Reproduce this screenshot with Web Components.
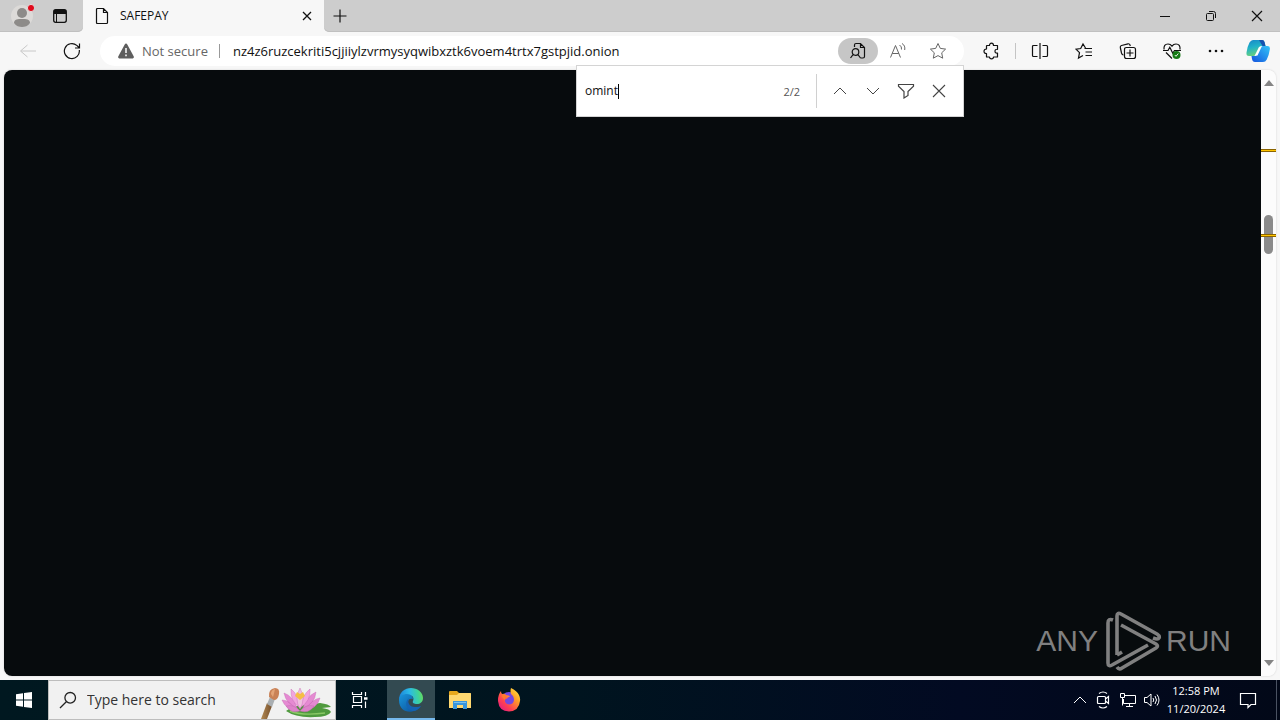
<!DOCTYPE html>
<html lang="en">
<head>
<meta charset="utf-8">
<title>SAFEPAY</title>
<style>
  html, body { margin: 0; height: 100%; }
  body { font-family: "Open Sans", "Noto Sans", sans-serif; font-size: 12px; color: #111; overflow: hidden; }
</style>
</head>
<body>
<desktop-screen></desktop-screen>

<script>
const line = (d, extra = '') => `<path d="${d}" fill="none" stroke="currentColor" ${extra}/>`;

/* name: [width, height, markup] */
const ICONS = {
  profile: [24, 24, `<circle cx="12" cy="12" r="11" fill="#dcdad8"/><circle cx="12" cy="9" r="5" fill="#8d8b89"/><path d="M4 19c0-4 4-4 8-4s8 0 8 4c-2 3-5 4-8 4s-6-1-8-4z" fill="#8d8b89"/><circle cx="21" cy="4" r="3.6" fill="#e00b1c" stroke="#e4dcdc"/>`],
  tabs: [16, 16, `<rect x="1.7" y="1.7" width="12.6" height="12.6" rx="2" fill="none" stroke="currentColor" stroke-width="1.3"/><path d="M2 2h12v4H5v8H4V6H2z" fill="currentColor"/>`],
  file: [14, 18, line('M2.5 1.5h6l4 4v10q0 1-1 1h-9q-1 0-1-1v-13q0-1 1-1zM8.5 1.5v4h4', 'stroke-width="1.2"')],
  close: [12, 12, line('M2 2l8 8M10 2l-8 8', 'stroke-width="1.3"')],
  plus: [14, 14, line('M7 .5v13M.5 7h13', 'stroke-width="1.2"')],
  min: [12, 12, line('M1 6.5h10')],
  restore: [12, 12, line('M2.5 3.5h5q1 0 1 1v5q0 1-1 1h-5q-1 0-1-1v-5q0-1 1-1zM4 1.5h4.5q2 0 2 2V8')],
  x: [14, 14, line('M2 2l10 10M12 2L2 12', 'stroke-width="1.2"')],
  back: [18, 16, line('M17 8H2M8.5 2l-7 6 7 6')],
  reload: [18, 18, line('M16.3 8A7.5 7.5 0 1 1 13.8 3.4L16 5.5M16.5 1.5v4.5h-4.5', 'stroke-width="1.2"')],
  warn: [18, 16, `<path d="M9 .5q.8 0 1.3 1l6.5 12q.5 1.5-1 2H2.2q-1.5-.5-1-2l6.5-12Q8.2.5 9 .5z" fill="#5e5e5e"/><path d="M9 5v5M9 11.5v1.8" stroke="#fff" stroke-width="1.5"/>`],
  findpage: [18, 18, line('M5.5 5V3q0-1.500 1.500-1.500h4.500l4 4v9q0 1.500-1.500 1.500h-2.500M11.500 1.500v4h4M9.800 10a3.300 3.300 0 1 1-6.600 0 3.300 3.300 0 0 1 6.600 0zM4.200 12.400L1.500 16M8.800 12.400l2.700 3.600', 'stroke-width="1.200"')],
  read: [18, 18, line('M1.500 15.500L6.500 3.500l5 12M3.200 11.500h6.600M10.500 3q2.500 1.500 2 4.500M13 1.500q3.500 2 2.700 6.500')],
  star: [18, 18, line('M9 1.500l2.300 4.900 5.300.7-3.900 3.700 1 5.400L9 13.600l-4.700 2.600 1-5.400L1.400 7.100l5.300-.7z')],
  puzzle: [18, 18, line('M5 3.500h2.500Q7.500 1.200 9.500 1.200t2 2.300h4v3.800q-2.500-.3-2.500 1.900t2.500 1.900v3.900h-4q0 1.800-2 1.800t-2-1.800H4.500v-3.500Q2 11.500 2 9.300T4.500 7V4z', 'stroke-width="1.200" stroke-linejoin="round"')],
  split: [18, 18, line('M6.500 3.500h-4q-1 0-1 1v9q0 1 1 1h4M11.500 3.500h4q1 0 1 1v9q0 1-1 1h-4M9 1v16', 'stroke-width="1.200"')],
  favs: [18, 18, line('M10.500 6L8 2 5.700 6.500 1 7.200l3.500 3.500L3.500 16 8 13.500M9.500 6.500h7.500M10.500 10h6.500M10.500 13.500h6.500', 'stroke-width="1.200"')],
  collect: [18, 18, line('M4.500 13Q3 13 2.500 11L1.300 5.500Q1 4 2.500 3.500L9 1.800q1.500-.3 2 1.200l.3 1M7.500 5.500h7q2 0 2 2v7q0 2-2 2h-7q-2 0-2-2v-7q0-2 2-2zM11 7.500v7M7.500 11h7', 'stroke-width="1.200"')],
  heart: [20, 18, line('M2 7.500Q1.500 2 6 2q2.500 0 4 2.200Q11.500 2 14 2q4.500 0 4 5.500M1 8.500h5l1.800-3.300 3 6L12.500 8.500H19M4 10.500l6 6', 'stroke-width="1.200"') + `<circle cx="14.500" cy="13" r="4" fill="#157a15"/><path d="M12.800 13l1.200 1.300 2.300-2.800" fill="none" stroke="#fff" stroke-width=".9"/>`],
  more: [16, 6, `<g fill="currentColor"><circle cx="2" cy="3" r="1.300"/><circle cx="8" cy="3" r="1.300"/><circle cx="14" cy="3" r="1.300"/></g>`],
  copilot: [24, 24, `<defs><linearGradient id="a" x1="0" y1="0" x2=".3" y2="1"><stop offset="0" stop-color="#1785c8"/><stop offset=".5" stop-color="#20b2c8"/><stop offset="1" stop-color="#66d07e"/></linearGradient><linearGradient id="b" x1="1" y1="0" x2="0" y2="1"><stop offset="0" stop-color="#32c5f8"/><stop offset="1" stop-color="#1454de"/></linearGradient></defs><path d="M7 1h9q2 0 2.500 2l1 4h-4q-2 0-3 3l-2 5q-.8 2-3 2H3q-3 0-2.500-3.500Q1.500 7 3.500 3.500 5 1 7 1z" fill="url(#a)"/><path d="M13 1h3q2 0 2.500 2l1 4h-3z" fill="#1552b0"/><path d="M17 7h4.500q3 0 2.300 3.500-1 6.500-3 10Q19.500 23 17 23H9q-2.500 0-3-3l-.5-3H8q2 0 3-2l3-6q1-2 3-2z" fill="url(#b)"/><path d="M13 8l3-1-4.500 9.500-3 .5z" fill="#fff"/>`],
  up: [14, 8, line('M1 7l6-6 6 6')],
  down: [14, 8, line('M1 1l6 6 6-6')],
  filter: [18, 16, line('M1.500 1.500h15v1.700L11 8.500v4L7 15V8.500L1.500 3.200z', 'stroke-width="1.200"')],
  bigx: [14, 14, line('M1 1l12 12M13 1L1 13', 'stroke-width="1.100"')],
  triup: [10, 6, `<path d="M5 0l5 6H0z" fill="#858585"/>`],
  tridown: [10, 6, `<path d="M0 0h10L5 6z" fill="#858585"/>`],
  windows: [16, 16, `<path d="M0 2.300L7 1.200v6.300H0zM8 1l8-1v7.500H8zM0 8.500h7v6.300l-7-1zM8 8.500h8V16l-8-1z" fill="#fff"/>`],
  search: [18, 18, line('M16.500 6.800a5.300 5.300 0 1 1-10.600 0 5.300 5.300 0 0 1 10.600 0zM7.300 10.700L1 17', 'stroke-width="1.300"')],
  lotus: [74, 38, `<defs><linearGradient id="w" x1="0" x2="1"><stop offset="0" stop-color="#b48a53"/><stop offset="1" stop-color="#76502d"/></linearGradient></defs>
    <path d="M0 38L6 22l5 3L6 38z" fill="url(#w)"/><path d="M6 23l3-7 5 2-3 8z" fill="#a9aeb1"/><path d="M8 16Q7 8 14 7q5 0 4 6t-5 6z" fill="#c98257"/><path d="M10 13q0-4 4-5-1 5-2 8z" fill="#e3a477"/>
    <path d="M25 30q8-7 22-6l12-2q9 1 11 4l-9 1q8 1 9 4-3 5-16 5Q35 37 25 30z" fill="#4f9a3e"/><path d="M29 30q12 5 35 2" fill="none" stroke="#89c765" stroke-width="1.500"/>
    <g transform="translate(-1 2)" stroke="#c565b2" stroke-width=".4"><path d="M22 17q8 0 14 10-10 0-14-10zM60 15q-8 1-15 12 12-1 15-12zM24 10q9 3 13 15Q26 21 24 10zM56 9q-9 4-13 16Q55 21 56 9z" fill="#e58ad2"/><path d="M31 6q8 6 9 19-10-7-9-19zM50 6q-8 6-10 19Q51 18 50 6z" fill="#f1a5df"/><path d="M40 5q6 11 0 21-6-10 0-21z" fill="#efc0df"/><path d="M26 23q8-2 14 5-9 3-14-5zM54 23q-8-2-14 5 9 3 14-5z" fill="#dd82ca"/></g><path d="M34 15l2-4 3 2 3-2 2 4-5 4z" fill="#f5bd45"/>`],
  taskview: [18, 18, `<g fill="none" stroke="#fff" stroke-width="1.200"><path d="M1.500 1v2.500h9V1M1.500 17v-2.500h9V17M2.500 5.500h8v6h-8zM14.500 1v4M14.500 10.500V17"/><path d="M13 7.500h3.500" stroke-width="2.500"/></g>`],
  edge: [26, 26, `<defs><linearGradient id="e" x1="0" y1=".5" x2="1" y2=".4"><stop offset="0" stop-color="#1b83d9"/><stop offset=".45" stop-color="#2bb9e8"/><stop offset=".8" stop-color="#3fd39a"/><stop offset="1" stop-color="#68db5c"/></linearGradient><linearGradient id="f" x1="0" x2="1" y2="1"><stop offset="0" stop-color="#1996dc"/><stop offset="1" stop-color="#0b4a94"/></linearGradient></defs><path d="M1 13C1 5 7 1 13 1s12 4 12 10c0 4-3 6-6 6-3 0-5-1-4-3 1-2 1-6-5-6-5 0-9 3-9 5z" fill="url(#e)"/><path d="M1 13c0-4 4-6 8-6 4 0 6 3 6 5-4-1-5 1-5 4 0 4 6 6 13 3-5 8-22 9-22-6z" fill="url(#f)"/><path d="M11 11c-2 4 0 9 6 9 2 0 5 0 6-1-2 3-5 5-8 5-7-1-9-9-4-13z" fill="#1463b3"/>`],
  folder: [22, 20, `<path d="M0 2q0-1 1-1h7l2 2h11q1 0 1 1v3H0z" fill="#e8a91e"/><path d="M10 3h11q1 0 1 1v14H0V5h8z" fill="#ffd870"/><path d="M4 19v-8h14v8h-4v-4H8v4z" fill="#3795dc"/><path d="M5 12h12v1H5z" fill="#78c0ee"/>`],
  firefox: [24, 24, `<defs><linearGradient id="x" x1="1" y1="0" x2=".1" y2="1"><stop offset="0" stop-color="#fff14a"/><stop offset=".35" stop-color="#ffa126"/><stop offset=".7" stop-color="#ff4052"/><stop offset="1" stop-color="#e0168a"/></linearGradient></defs><circle cx="12" cy="12" r="8" fill="#7547e0"/><path d="M14 0q6 3 8 7 1.500 3 1 6-1 10-11 10.500Q2 23.500 1 13 .800 7 4 3q0 2 1 3 3-1 4 1 3 0 4 1.500-2 .5-3 2-2.500.500-2 3 1 3 4.500 3 4-.500 4.500-4.500Q17 8 14 6q-1-3 0-6z" fill="url(#x)"/><path d="M4.500 8q2.500-2.500 5-.500Q8 9 7.500 12z" fill="#ff7b2b"/>`],
  meet: [16, 20, `<g fill="none" stroke="#fff" stroke-width="1.200"><path d="M2.500 6.500h6q1 0 1 1v5q0 1-1 1h-6q-1 0-1-1v-5q0-1 1-1zM9.500 9l3-2.500v7L9.500 11M3 3.500q4-3 8 0M3 16.500q4 3 8 0"/></g>`],
  network: [18, 16, `<g fill="none" stroke="#fff"><path d="M5 3.500h11.500v8H4.500V7M10.500 11.500v3M7 14.500h7M1.500 1.500h4v4h-4zM3.500 5.500v8"/></g>`],
  volume: [18, 14, `<g fill="none" stroke="#fff"><path d="M1.500 4.500h2.500l4-3.500v12l-4-3.500H1.500zM10 5q1.500 2 0 4M12 3q3 4 0 8M14 1.500q4 5.500 0 11"/></g>`],
  note: [18, 18, `<path d="M1.500 2.500h15v11H12l-3 3v-3H1.500z" fill="none" stroke="#fff" stroke-width="1.200"/>`],
  play: [60, 64, `<g fill="none" stroke="#808080" stroke-width="3.600" stroke-linejoin="round"><path d="M11 11Q6 9 6 14v40q0 4 4 2l36-20"/><path d="M15 46V7q0-4 4-2l36 20q3 2 2 4-1 2-6 0"/><path d="M15 46l5-3"/><path d="M19 16l35 19q3 2 0 4L20 59q-3 2-5-1"/></g>`]
};

function define(name, html) {
  customElements.define(name, class extends HTMLElement {
    constructor() {
      super();
      this.attachShadow({ mode: 'open' }).innerHTML = html;
    }
  });
}

customElements.define('ui-icon', class extends HTMLElement {
  connectedCallback() {
    if (this.shadowRoot) return;
    const [w, h, art] = ICONS[this.getAttribute('name')];
    this.attachShadow({ mode: 'open' }).innerHTML =
      `<style>:host{display:block;flex:none}svg{display:block}</style><svg width="${w}" height="${h}" viewBox="0 0 ${w} ${h}" aria-hidden="true">${art}</svg>`;
  }
});

customElements.define('icon-button', class extends HTMLElement {
  connectedCallback() {
    if (this.shadowRoot) return;
    this.attachShadow({ mode: 'open' }).innerHTML = `<style>
      :host { display: block; flex: none; width: 40px; height: 28px; }
      button { width: 100%; height: 100%; padding: 0; border: 0; background: var(--bg, none); border-radius: var(--radius, 0);
        color: inherit; display: flex; align-items: center; justify-content: center; }
      </style><button type="button" aria-label="${this.getAttribute('label')}"><ui-icon name="${this.getAttribute('icon')}"></ui-icon></button>`;
  }
});

define('tab-strip', `<style>
  :host { display: flex; align-items: stretch; height: 32px; background: #f7f7f7; }
  .lead, .rest { background: #cdcdcd; display: flex; align-items: center; box-shadow: inset 0 -1px #c0c0c0; }
  .lead { width: 83px; border-bottom-right-radius: 5px; }
  .lead icon-button { width: 34px; }
  .lead icon-button:first-child { width: 43px; }
  .tab { width: 241px; box-sizing: border-box; display: flex; align-items: center; padding: 0 4px 0 12px; gap: 11px; }
  .tab span { flex: 1; line-height: 16px; }
  .tab icon-button { width: 26px; }
  .rest { flex: 1; border-bottom-left-radius: 5px; }
  .rest > :first-child { width: 32px; }
  .win { margin-left: auto; display: flex; height: 100%; }
  .win icon-button { width: 46px; height: 100%; }
</style>
<div class="lead"><icon-button icon="profile" label="Profile"></icon-button><icon-button icon="tabs" label="Tab actions"></icon-button></div>
<div class="tab"><ui-icon name="file"></ui-icon><span>SAFEPAY</span><icon-button icon="close" label="Close tab"></icon-button></div>
<div class="rest"><icon-button icon="plus" label="New tab"></icon-button>
  <div class="win"><icon-button icon="min" label="Minimize"></icon-button><icon-button icon="restore" label="Restore"></icon-button><icon-button icon="x" label="Close"></icon-button></div></div>`);

define('find-bar', `<style>
  :host { display: flex; align-items: center; box-sizing: border-box; width: 388px; height: 52px; padding: 0 8px;
    background: #fff; border: 1px solid #d4d4d4; }
  .field { flex: 1; display: flex; align-items: center; }
  input { field-sizing: content; border: 0; padding: 0; margin: 0; outline: 0; background: none; font: 12px/16px "Open Sans", "Noto Sans", sans-serif; color: #111; }
  .caret { width: 1px; height: 15px; background: #000; }
  output { color: #555; font-size: 11px; margin-right: 16px; }
  .rule { width: 1px; height: 34px; background: #d0d0d0; margin-right: 6px; }
  icon-button { width: 33px; height: 32px; color: #444; }
</style>
<div class="field"><input type="text" aria-label="Find on page" value="omint"><span class="caret"></span></div>
<output>2/2</output><span class="rule"></span>
<icon-button icon="up" label="Previous result"></icon-button><icon-button icon="down" label="Next result"></icon-button><icon-button icon="filter" label="Filter"></icon-button><icon-button icon="bigx" label="Close find"></icon-button>`);

define('address-bar', `<style>
  :host { position: relative; display: flex; align-items: center; height: 30px; border-radius: 15px; background: #fff; font-size: 13px; }
  .warn { display: flex; align-items: center; gap: 7px; padding-left: 17px; color: #666; }
  .rule { width: 1px; height: 14px; background: #999; margin: 0 13px 0 11px; }
  input { flex: 1; min-width: 0; border: 0; padding: 0; outline: 0; background: none; color: #111; font: 13px/20px "Open Sans", "Noto Sans", sans-serif; }
  icon-button { height: 26px; color: #666; }
  .on { --bg: #c6c6c6; --radius: 13px; color: #111; }
  icon-button:last-of-type { margin-right: 6px; }
  find-bar { position: absolute; right: 0; bottom: -51px; z-index: 2; }
</style>
<div class="warn"><ui-icon name="warn"></ui-icon><span>Not secure</span></div><span class="rule"></span>
<input type="text" aria-label="Address" value="nz4z6ruzcekriti5cjjiiylzvrmysyqwibxztk6voem4trtx7gstpjid.onion">
<icon-button class="on" icon="findpage" label="Find on page"></icon-button><icon-button icon="read" label="Read aloud"></icon-button><icon-button icon="star" label="Add to favorites"></icon-button>
<find-bar></find-bar>`);

define('browser-toolbar', `<style>
  :host { display: flex; align-items: center; gap: 4px; height: 38px; padding: 0 4px 0 8px; background: #f7f7f7; }
  .off { color: #c8c8c8; }
  address-bar { flex: 1; margin: 0 3px 0 4px; }
  .rule { width: 1px; height: 16px; background: #c4c4c4; }
  icon-button:last-child { width: 36px; }
</style>
<icon-button class="off" icon="back" label="Back"></icon-button><icon-button icon="reload" label="Refresh"></icon-button>
<address-bar></address-bar>
<icon-button icon="puzzle" label="Extensions"></icon-button><span class="rule"></span>
<icon-button icon="split" label="Split screen"></icon-button><icon-button icon="favs" label="Favorites"></icon-button><icon-button icon="collect" label="Collections"></icon-button><icon-button icon="heart" label="Browser essentials"></icon-button><icon-button icon="more" label="Settings and more"></icon-button><icon-button icon="copilot" label="Copilot"></icon-button>`);

define('page-scrollbar', `<style>
  :host { display: flex; flex-direction: column; justify-content: space-between; align-items: center; position: relative; width: 15px; box-sizing: border-box; padding: 10px 0; background: #fcfcfc; }
  .thumb { position: absolute; left: 3px; width: 9px; top: 24%; height: 39px; border-radius: 5px; background: #8b8b8b; }
  .hit { position: absolute; left: 0; right: 0; height: 1px; background: #ffc400; border: solid #8a6400; border-width: 1px 0; }
  .first { top: 13%; }
  .second { top: 27%; }
</style>
<ui-icon name="triup"></ui-icon><div class="thumb"></div><div class="hit first"></div><div class="hit second"></div><ui-icon name="tridown"></ui-icon>`);

define('any-run-mark', `<style>
  :host { display: flex; align-items: center; gap: 4px; color: #808080; font: 30px/48px "Liberation Sans", sans-serif; }
</style><span>ANY</span><ui-icon name="play"></ui-icon><span>RUN</span>`);

define('page-view', `<style>
  :host { display: flex; flex: 1; min-height: 0; margin: 0 4px 4px; border-radius: 8px; overflow: hidden; box-shadow: 0 0 2px #ccc; }
  main { flex: 1; background: #070b0d; display: flex; align-items: flex-end; justify-content: flex-end; padding: 0 30px 3px 0; }
</style><main><any-run-mark></any-run-mark></main><page-scrollbar></page-scrollbar>`);

define('task-bar', `<style>
  :host { display: flex; height: 40px; background: linear-gradient(90deg, #001820, #00141f 45%, #020a22 75%, #020818); color: #fff; }
  icon-button { width: 49px; height: 40px; }
  .start, .edge { width: 48px; }
  .search { display: flex; align-items: center; box-sizing: border-box; width: 288px; border: 1px solid #bdbdbd; background: #f1f1f1; color: #222; padding-left: 10px; gap: 10px; }
  .search input { flex: 1; min-width: 0; border: 0; padding: 0; outline: 0; background: none; font: 14px/20px "Open Sans", "Noto Sans", sans-serif; }
  .search input::placeholder { color: #333; opacity: 1; }
  .view { width: 48px; margin-right: 3px; }
  .edge { --bg: #334a51; position: relative; }
  .edge::after { content: ""; position: absolute; left: 0; right: 0; bottom: 0; height: 2px; background: #76b9ed; }
  .tray { margin-left: auto; display: flex; align-items: center; }
  .tray icon-button { width: 24px; }
  time { width: 64px; text-align: center; font-size: 11px; line-height: 18px; }
  .tray .note { width: 40px; }
  .peek { width: 4px; height: 40px; box-sizing: border-box; margin-left: 8px; border-left: 1px solid #4a5262; }
</style>
<icon-button class="start" icon="windows" label="Start"></icon-button>
<label class="search"><ui-icon name="search"></ui-icon><input type="text" placeholder="Type here to search" aria-label="Search"><ui-icon name="lotus"></ui-icon></label>
<icon-button class="view" icon="taskview" label="Task view"></icon-button><icon-button class="edge" icon="edge" label="Microsoft Edge"></icon-button><icon-button icon="folder" label="File Explorer"></icon-button><icon-button icon="firefox" label="Firefox"></icon-button>
<div class="tray"><icon-button icon="up" label="Show hidden icons"></icon-button><icon-button icon="meet" label="Meet Now"></icon-button><icon-button icon="network" label="Network"></icon-button><icon-button icon="volume" label="Volume"></icon-button>
<time datetime="2024-11-20T12:58">12:58 PM<br>11/20/2024</time><icon-button class="note" icon="note" label="Notifications"></icon-button><span class="peek"></span></div>`);

define('desktop-screen', `<style>
  :host { display: flex; flex-direction: column; height: 100vh; background: #f7f7f7; }
</style><tab-strip></tab-strip><browser-toolbar></browser-toolbar><page-view></page-view><task-bar></task-bar>`);
</script>
</body>
</html>
